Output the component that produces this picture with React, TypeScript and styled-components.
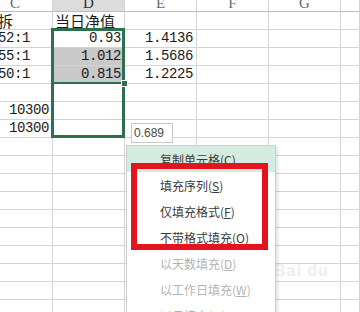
import React from "react";
import styled, { createGlobalStyle } from "styled-components";

const GlobalStyle = createGlobalStyle`
  html, body { margin: 0; padding: 0; background: #ffffff; }
  body { overflow: hidden; }
`;

const Sheet = styled.div`
  position: relative;
  width: 360px;
  height: 312px;
  overflow: hidden;
  background: #ffffff;
`;

const Grid = styled.div`
  display: grid;
  grid-template-columns: 53px 72px 72px 72px 72px 19px;
  grid-template-rows: 12px repeat(17, 18px);
`;

const HeaderCell = styled.div<{ $selected?: boolean; $shift?: number }>`
  box-sizing: border-box;
  overflow: hidden;
  border-right: 1px solid #d4d4d4;
  border-bottom: 1px solid #bdbdbd;
  background: ${(p) => (p.$selected ? "#dcdcdc" : "#ffffff")};
  color: ${(p) => (p.$selected ? "#2f2f2f" : "#6a6a6a")};
  font-family: "Liberation Serif", "DejaVu Serif", serif;
  font-size: 15px;
  line-height: 12px;
  text-align: center;
  padding-right: ${(p) => p.$shift ?? 0}px;
  span {
    display: inline-block;
    transform: translateY(-3px);
  }
`;

const Cell = styled.div<{ $align?: "left" | "right"; $fill?: boolean; $cjk?: boolean }>`
  box-sizing: border-box;
  overflow: visible;
  white-space: nowrap;
  border-right: 1px solid #d4d4d4;
  border-bottom: 1px solid #d4d4d4;
  background: ${(p) => (p.$fill ? "#c9c9c9" : "transparent")};
  color: #1a1a1a;
  font-family: ${(p) =>
    p.$cjk
      ? '"Noto Sans CJK SC", "Noto Sans", sans-serif'
      : '"Liberation Mono", "DejaVu Sans Mono", monospace'};
  font-size: ${(p) => (p.$cjk ? "15px" : "14px")};
  letter-spacing: ${(p) => (p.$cjk ? "0" : "-0.4px")};
  line-height: 17px;
  text-align: ${(p) => p.$align ?? "left"};
  padding: ${(p) => (p.$align === "right" ? "0 3px 0 0" : "0 0 0 2px")};
`;

const LeadCell = styled(Cell)`
  padding-left: 0;
  text-indent: -2px;
`;

const Selection = styled.div`
  position: absolute;
  left: 51px;
  top: 28px;
  width: 74px;
  height: 110px;
  box-sizing: border-box;
  border: 3px solid #2f6e4e;
`;

const RangeLine = styled.div`
  position: absolute;
  left: 52px;
  top: 82px;
  width: 72px;
  height: 2px;
  background: #2f6e4e;
`;

const FillHandle = styled.div`
  position: absolute;
  left: 121px;
  top: 80px;
  width: 5px;
  height: 5px;
  background: #2f6e4e;
  border: 1px solid #ffffff;
`;

const Tip = styled.div`
  position: absolute;
  left: 131px;
  top: 123px;
  width: 42px;
  height: 20px;
  box-sizing: border-box;
  border: 1px solid #c8c8c8;
  background: #ffffff;
  color: #4a4a4a;
  font-family: "Liberation Sans", Arial, sans-serif;
  font-size: 12px;
  line-height: 18px;
  padding-left: 2px;
`;

const Menu = styled.div`
  position: absolute;
  left: 126px;
  top: 145px;
  width: 150px;
  box-sizing: border-box;
  border: 1px solid #cfcfcf;
  background: #ffffff;
  box-shadow: 2px 2px 3px rgba(0, 0, 0, 0.12);
  display: flex;
  flex-direction: column;
`;

const MenuItem = styled.div<{ $active?: boolean; $disabled?: boolean }>`
  height: 26px;
  display: flex;
  align-items: center;
  padding-left: 33px;
  background: ${(p) => (p.$active ? "#d4ebdf" : "transparent")};
  color: ${(p) => (p.$disabled ? "#b4b4b4" : "#3a3a3a")};
  font-family: "Noto Sans CJK SC", "Noto Sans", sans-serif;
  font-size: 12px;
  white-space: nowrap;
  u {
    text-decoration: underline;
    text-underline-offset: 1px;
  }
`;

const RedBox = styled.div`
  position: absolute;
  left: 131px;
  top: 163px;
  width: 137px;
  height: 87px;
  box-sizing: border-box;
  border: 6px solid #e5131b;
`;

const Watermark = styled.div`
  position: absolute;
  left: 274px;
  top: 262px;
  color: rgba(205, 205, 205, 0.35);
  font-family: "Liberation Sans", Arial, sans-serif;
  font-size: 16px;
  font-weight: bold;
  letter-spacing: 1px;
`;

type Row = { c?: string; d?: string; e?: string; dFill?: boolean; cRight?: boolean; dCjk?: boolean; cCjk?: boolean };

const rows: Row[] = [
  { c: "拆", cCjk: true, d: "当日净值", dCjk: true },
  { c: "52:1", d: "0.93", e: "1.4136" },
  { c: "55:1", d: "1.012", e: "1.5686", dFill: true },
  { c: "50:1", d: "0.815", e: "1.2225", dFill: true },
  {},
  { c: "10300", cRight: true },
  { c: "10300", cRight: true },
  ...Array.from({ length: 10 }, () => ({})),
];

const headers: { label: string; shift?: number }[] = [
  { label: "C", shift: 22 },
  { label: "D" },
  { label: "E" },
  { label: "F" },
  { label: "G" },
  { label: "" },
];

const menuItems: { label: string; key: string; active?: boolean; disabled?: boolean }[] = [
  { label: "复制单元格", key: "C", active: true },
  { label: "填充序列", key: "S" },
  { label: "仅填充格式", key: "F" },
  { label: "不带格式填充", key: "O" },
  { label: "以天数填充", key: "D", disabled: true },
  { label: "以工作日填充", key: "W", disabled: true },
  { label: "以月填充", key: "M", disabled: true },
];

export default function App() {
  return (
    <>
      <GlobalStyle />
      <Sheet>
        <Grid>
          {headers.map((h, i) => (
            <HeaderCell key={"h" + i} $selected={h.label === "D"} $shift={h.shift}>
              <span>{h.label}</span>
            </HeaderCell>
          ))}
          {rows.map((r, i) => (
            <React.Fragment key={i}>
              {r.cRight ? (
                <Cell $align="right">{r.c}</Cell>
              ) : (
                <LeadCell $cjk={r.cCjk}>{r.c}</LeadCell>
              )}
              <Cell $align={r.dCjk ? "left" : "right"} $fill={r.dFill} $cjk={r.dCjk}>
                {r.d}
              </Cell>
              <Cell $align="right">{r.e}</Cell>
              <Cell />
              <Cell />
              <Cell />
            </React.Fragment>
          ))}
        </Grid>
        <Selection />
        <RangeLine />
        <FillHandle />
        <Tip>0.689</Tip>
        <Menu>
          {menuItems.map((m) => (
            <MenuItem key={m.key} $active={m.active} $disabled={m.disabled}>
              {m.label}(<u>{m.key}</u>)
            </MenuItem>
          ))}
        </Menu>
        <RedBox />
        <Watermark>Bai du</Watermark>
      </Sheet>
    </>
  );
}
